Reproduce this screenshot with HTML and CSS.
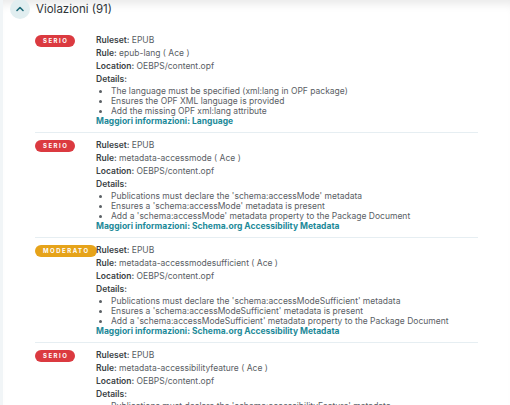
FILE: index.html
```html
<!DOCTYPE html>
<html lang="it">
<head>
<meta charset="utf-8">
<title>Violazioni</title>
<link rel="stylesheet" href="styles.css">
</head>
<body>
<div class="page">
  <div class="header">
    <span class="toggle">
      <svg width="10" height="10" viewBox="0 0 10 10"><path d="M2 6.5 L5 3.5 L8 6.5" fill="none" stroke="#1d6a77" stroke-width="1.6" stroke-linecap="round" stroke-linejoin="round"/></svg>
    </span>
    <h2 class="title">Violazioni (91)</h2>
  </div>
  <div class="list">
    <div class="item">
      <div class="badge-col"><span class="badge serio">SERIO</span></div>
      <div class="info">
        <div class="line"><b>Ruleset:</b> EPUB</div>
        <div class="line"><b>Rule:</b> epub-lang ( Ace )</div>
        <div class="line"><b>Location:</b> OEBPS/content.opf</div>
        <div class="line"><b>Details:</b></div>
        <ul class="details">
          <li>The language must be specified (xml:lang in OPF package)</li>
          <li>Ensures the OPF XML language is provided</li>
          <li>Add the missing OPF xml:lang attribute</li>
        </ul>
        <a class="more" href="#">Maggiori informazioni: Language</a>
      </div>
    </div>
    <div class="item">
      <div class="badge-col"><span class="badge serio">SERIO</span></div>
      <div class="info">
        <div class="line"><b>Ruleset:</b> EPUB</div>
        <div class="line"><b>Rule:</b> metadata-accessmode ( Ace )</div>
        <div class="line"><b>Location:</b> OEBPS/content.opf</div>
        <div class="line"><b>Details:</b></div>
        <ul class="details">
          <li>Publications must declare the 'schema:accessMode' metadata</li>
          <li>Ensures a 'schema:accessMode' metadata is present</li>
          <li>Add a 'schema:accessMode' metadata property to the Package Document</li>
        </ul>
        <a class="more" href="#">Maggiori informazioni: Schema.org Accessibility Metadata</a>
      </div>
    </div>
    <div class="item">
      <div class="badge-col"><span class="badge moderato">MODERATO</span></div>
      <div class="info">
        <div class="line"><b>Ruleset:</b> EPUB</div>
        <div class="line"><b>Rule:</b> metadata-accessmodesufficient ( Ace )</div>
        <div class="line"><b>Location:</b> OEBPS/content.opf</div>
        <div class="line"><b>Details:</b></div>
        <ul class="details">
          <li>Publications must declare the 'schema:accessModeSufficient' metadata</li>
          <li>Ensures a 'schema:accessModeSufficient' metadata is present</li>
          <li>Add a 'schema:accessModeSufficient' metadata property to the Package Document</li>
        </ul>
        <a class="more" href="#">Maggiori informazioni: Schema.org Accessibility Metadata</a>
      </div>
    </div>
    <div class="item">
      <div class="badge-col"><span class="badge serio">SERIO</span></div>
      <div class="info">
        <div class="line"><b>Ruleset:</b> EPUB</div>
        <div class="line"><b>Rule:</b> metadata-accessibilityfeature ( Ace )</div>
        <div class="line"><b>Location:</b> OEBPS/content.opf</div>
        <div class="line"><b>Details:</b></div>
        <ul class="details">
          <li>Publications must declare the 'schema:accessibilityFeature' metadata</li>
          <li>Ensures a 'schema:accessibilityFeature' metadata is present</li>
          <li>Add a 'schema:accessibilityFeature' metadata property to the Package Document</li>
        </ul>
        <a class="more" href="#">Maggiori informazioni: Schema.org Accessibility Metadata</a>
      </div>
    </div>
  </div>
</div>
</body>
</html>
```

FILE: styles.css
```css
html, body {
  margin: 0;
  padding: 0;
  background: #ffffff;
}
body {
  font-family: Inter, "Noto Sans", sans-serif;
  color: #5a6065;
  overflow: hidden;
}
.page {
  height: 405px;
  border-left: 3px solid #f1f5f7;
  box-shadow: inset 0 10px 10px -6px rgba(0, 0, 0, 0.09);
  box-sizing: border-box;
  overflow: hidden;
}
.header {
  display: flex;
  align-items: center;
  gap: 6px;
  height: 18px;
  padding: 0 0 0 7px;
}
.toggle {
  width: 20px;
  height: 20px;
  border-radius: 50%;
  background: #e1eef0;
  display: flex;
  align-items: center;
  justify-content: center;
  flex: none;
}
.toggle svg { display: block; }
.title {
  margin: 0;
  font-size: 11.5px;
  font-weight: 400;
  color: #2f3438;
  line-height: 18px;
}
.list {
  margin: 10px 0 0 32px;
  width: 443px;
}
.item {
  display: flex;
  padding: 5.5px 0;
  border-bottom: 1px solid #e6eef2;
}
.badge-col {
  width: 61px;
  flex: none;
  display: flex;
  align-items: flex-start;
  padding-top: 1px;
}
.badge {
  display: block;
  height: 12px;
  line-height: 12px;
  padding: 0 7px 0 8px;
  border-radius: 6px;
  color: #ffffff;
  font-size: 6px;
  font-weight: 700;
  letter-spacing: 1.5px;
}
.serio { background: #db3a40; }
.moderato { background: #e6a31a; }
.info {
  font-size: 8.5px;
}
.line {
  line-height: 13px;
}
.line b {
  color: #3a3f44;
  font-weight: 600;
}
.details {
  margin: 0;
  padding: 0 0 0 15px;
  line-height: 10px;
}
.details li { margin: 0; }
.more {
  display: block;
  line-height: 11px;
  color: #1d8a99;
  font-weight: 700;
  text-decoration: none;
}
```
